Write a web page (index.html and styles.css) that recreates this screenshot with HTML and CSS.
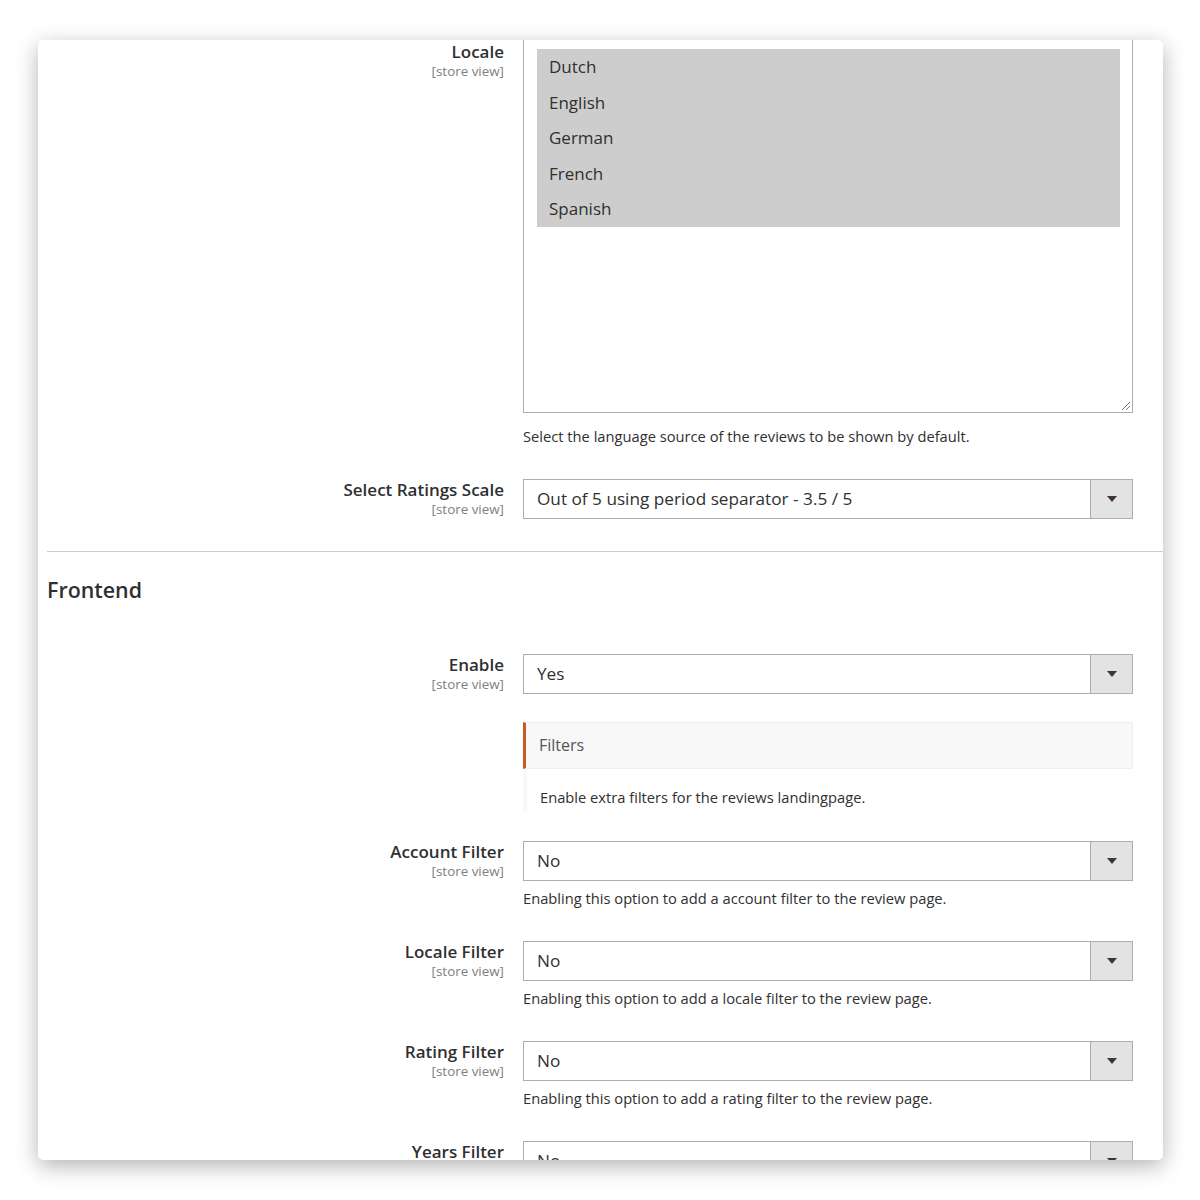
FILE: index.html
```html
<!DOCTYPE html>
<html>
<head>
<meta charset="utf-8">
<link rel="stylesheet" href="styles.css">
</head>
<body>
<div class="card">
  <div class="row row-first">
    <div class="label"><span class="name">Locale</span><span class="scope">[store view]</span></div>
    <div class="control">
      <div class="listbox">
        <div class="options">
          <div class="opt">Dutch</div>
          <div class="opt">English</div>
          <div class="opt">German</div>
          <div class="opt">French</div>
          <div class="opt">Spanish</div>
        </div>
        <svg class="grip" width="12" height="12" viewBox="0 0 12 12"><path d="M11 3 L3 11 M11 7 L7 11" stroke="#777" stroke-width="1" fill="none"/></svg>
      </div>
      <div class="note">Select the language source of the reviews to be shown by default.</div>
    </div>
  </div>
  <div class="row">
    <div class="label"><span class="name">Select Ratings Scale</span><span class="scope">[store view]</span></div>
    <div class="control">
      <div class="select"><span class="val">Out of 5 using period separator - 3.5 / 5</span><span class="arrow"></span></div>
    </div>
  </div>
  <div class="divider"></div>
  <h2 class="section">Frontend</h2>
  <div class="row">
    <div class="label"><span class="name">Enable</span><span class="scope">[store view]</span></div>
    <div class="control">
      <div class="select"><span class="val">Yes</span><span class="arrow"></span></div>
    </div>
  </div>
  <div class="row row-group">
    <div class="label"></div>
    <div class="control">
      <div class="group-head">Filters</div>
      <div class="group-comment">Enable extra filters for the reviews landingpage.</div>
    </div>
  </div>
  <div class="row">
    <div class="label"><span class="name">Account Filter</span><span class="scope">[store view]</span></div>
    <div class="control">
      <div class="select"><span class="val">No</span><span class="arrow"></span></div>
      <div class="note sm">Enabling this option to add a account filter to the review page.</div>
    </div>
  </div>
  <div class="row">
    <div class="label"><span class="name">Locale Filter</span><span class="scope">[store view]</span></div>
    <div class="control">
      <div class="select"><span class="val">No</span><span class="arrow"></span></div>
      <div class="note sm">Enabling this option to add a locale filter to the review page.</div>
    </div>
  </div>
  <div class="row">
    <div class="label"><span class="name">Rating Filter</span><span class="scope">[store view]</span></div>
    <div class="control">
      <div class="select"><span class="val">No</span><span class="arrow"></span></div>
      <div class="note sm">Enabling this option to add a rating filter to the review page.</div>
    </div>
  </div>
  <div class="row">
    <div class="label"><span class="name">Years Filter</span><span class="scope">[store view]</span></div>
    <div class="control">
      <div class="select"><span class="val">No</span><span class="arrow"></span></div>
      <div class="note sm">Enabling this option to add a years filter to the review page.</div>
    </div>
  </div>
</div>
</body>
</html>
```
FILE: styles.css
```css
* { box-sizing: border-box; }
html, body { margin: 0; padding: 0; background: #ffffff; }
body {
  font-family: "Open Sans", "Noto Sans", sans-serif;
  color: #303030;
  padding: 40px 37px 0 38px;
  height: 1200px;
  overflow: hidden;
}
.card {
  width: 1125px;
  height: 1120px;
  background: #fff;
  border-radius: 5px;
  overflow: hidden;
  box-shadow: 0 6px 22px rgba(0,0,0,0.3);
  padding: 0 30px 0 9px;
}
.row {
  display: grid;
  grid-template-columns: 457px 610px;
  column-gap: 19px;
  margin-bottom: 33px;
}
.row-group { margin-bottom: 29px; }
.label {
  display: flex;
  flex-direction: column;
  align-items: flex-end;
  text-align: right;
}
.name {
  font-size: 17px;
  font-weight: 600;
  line-height: 22px;
  color: #303030;
}
.row-first .name { margin-top: 1px; }
.scope {
  font-size: 13.4px;
  line-height: 16px;
  color: #808080;
  margin-top: 0;
}
.listbox {
  position: relative;
  height: 373px;
  border: 1px solid #adadad;
  border-top: none;
  padding: 9px 12px 0 13px;
}
.options { background: #cdcdcd; }
.opt {
  font-size: 17px;
  line-height: 35.6px;
  padding-left: 12px;
  color: #303030;
}
.grip { position: absolute; right: 1px; bottom: 1px; }
.note {
  font-size: 14.7px;
  line-height: 20px;
  margin-top: 13px;
  color: #303030;
}
.note.sm { margin-top: 7px; }
.select {
  display: flex;
  height: 40px;
  border: 1px solid #adadad;
  background: #fff;
}
.val {
  flex: 1;
  font-size: 17.2px;
  line-height: 38px;
  padding-left: 13px;
  color: #303030;
}
.arrow {
  width: 42px;
  background: #e3e3e3;
  border-left: 1px solid #adadad;
  position: relative;
}
.arrow::after {
  content: "";
  position: absolute;
  left: 16px;
  top: 16px;
  border-left: 5px solid transparent;
  border-right: 5px solid transparent;
  border-top: 6px solid #41362f;
}
.divider {
  height: 1px;
  background: #cccccc;
  margin-right: -30px;
  margin-top: -1px;
}
.section {
  margin: 24px 0 50px;
  font-size: 21.4px;
  line-height: 28px;
  font-weight: 600;
  color: #303030;
}
.group-head {
  height: 47px;
  background: #f8f8f8;
  border: 1px solid #eeeeee;
  border-left: 3px solid #c9592b;
  font-size: 16px;
  line-height: 44px;
  padding-left: 13px;
  color: #555;
  margin-top: -5px;
}
.group-comment {
  height: 43px;
  border-left: 4px solid #f8f8f8;
  padding-left: 13px;
  font-size: 14.7px;
  line-height: 20px;
  padding-top: 18px;
  color: #303030;
}
```
